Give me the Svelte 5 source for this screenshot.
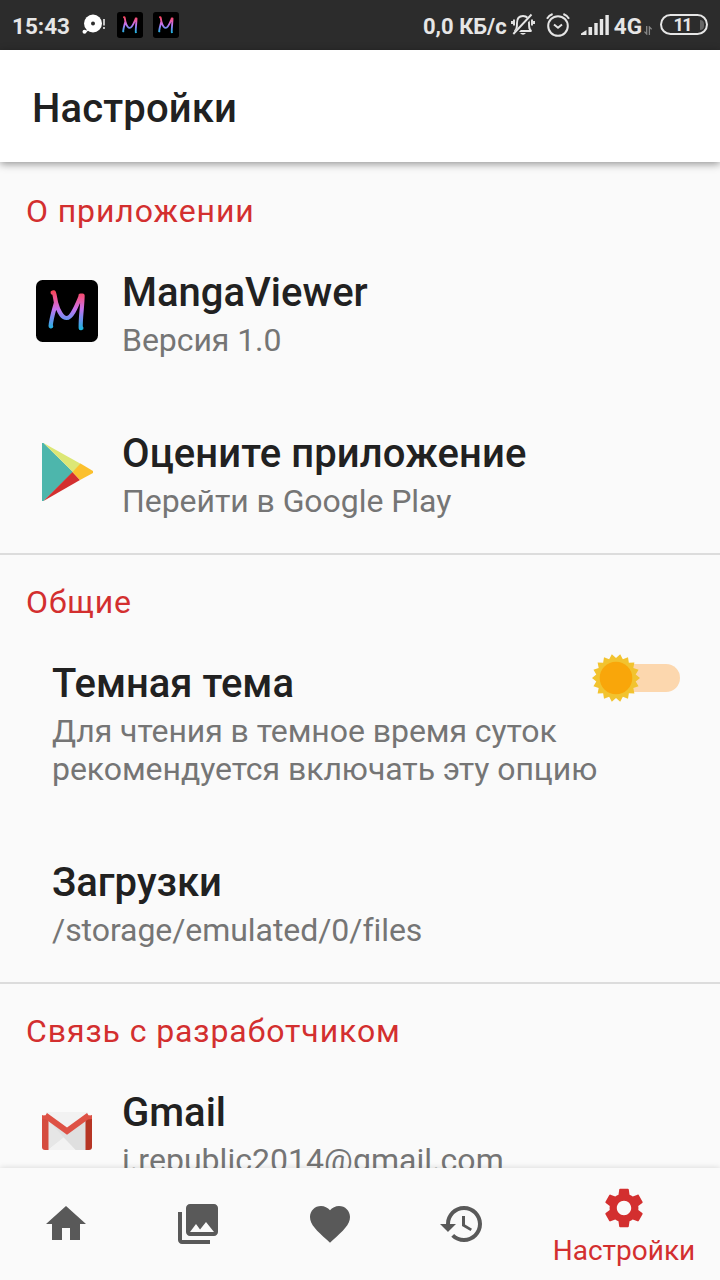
<script>
  let darkTheme = $state(false);
  let active = $state('settings');

  const tabs = [
    { id: 'home', label: 'Главная', path: 'M10 20v-6h4v6h5v-8h3L12 3 2 12h3v8z' },
    {
      id: 'library',
      label: 'Каталог',
      path: 'M22 16V4c0-1.1-.9-2-2-2H8c-1.1 0-2 .9-2 2v12c0 1.1.9 2 2 2h12c1.1 0 2-.9 2-2zm-11-4l2.03 2.71L16 11l4 5H8l3-4zM2 6v14c0 1.1.9 2 2 2h14v-2H4V6H2z'
    },
    {
      id: 'favorites',
      label: 'Избранное',
      path: 'M12 21.35l-1.45-1.32C5.4 15.36 2 12.28 2 8.5 2 5.42 4.42 3 7.5 3c1.74 0 3.41.81 4.5 2.09C13.09 3.81 14.76 3 16.5 3 19.58 3 22 5.42 22 8.5c0 3.78-3.4 6.86-8.55 11.54L12 21.35z'
    },
    {
      id: 'history',
      label: 'История',
      path: 'M13 3c-4.97 0-9 4.03-9 9H1l3.89 3.89.07.14L9 12H6c0-3.87 3.13-7 7-7s7 3.13 7 7-3.13 7-7 7c-1.93 0-3.68-.79-4.94-2.06l-1.42 1.42C8.27 19.99 10.51 21 13 21c4.97 0 9-4.03 9-9s-4.03-9-9-9zm-1 5v5l4.28 2.54.72-1.21-3.5-2.08V8H12z'
    },
    {
      id: 'settings',
      label: 'Настройки',
      path: 'M19.14 12.94c.04-.3.06-.61.06-.94 0-.32-.02-.64-.07-.94l2.03-1.58c.18-.14.23-.41.12-.61l-1.92-3.32c-.12-.22-.37-.29-.59-.22l-2.39.96c-.5-.38-1.03-.7-1.62-.94l-.36-2.54c-.04-.24-.24-.41-.48-.41h-3.84c-.24 0-.43.17-.47.41l-.36 2.54c-.59.24-1.13.57-1.62.94l-2.39-.96c-.22-.08-.47 0-.59.22L2.74 8.87c-.12.21-.08.47.12.61l2.03 1.58c-.05.3-.09.63-.09.94s.02.64.07.94l-2.03 1.58c-.18.14-.23.41-.12.61l1.92 3.32c.12.22.37.29.59.22l2.39-.96c.5.38 1.03.7 1.62.94l.36 2.54c.05.24.24.41.48.41h3.84c.24 0 .44-.17.47-.41l.36-2.54c.59-.24 1.13-.56 1.62-.94l2.39.96c.22.08.47 0 .59-.22l1.92-3.32c.12-.22.07-.47-.12-.61l-2.01-1.58zM12 15.6c-1.98 0-3.6-1.62-3.6-3.6s1.62-3.6 3.6-3.6 3.6 1.62 3.6 3.6-1.62 3.6-3.6 3.6z'
    }
  ];

  // 18 rays, every second point is pulled in
  const sunPoints = Array.from({ length: 36 }, (_, i) => {
    const r = i % 2 ? 20 : 24;
    const a = (i * Math.PI) / 18;
    return `${(24 + r * Math.cos(a)).toFixed(2)},${(24 + r * Math.sin(a)).toFixed(2)}`;
  }).join(' ');
</script>

{#snippet mangaLogo(cls, id)}
  <svg class={cls} viewBox="0 0 62 62">
    <defs>
      <linearGradient id={id} gradientUnits="userSpaceOnUse" x1="0" y1="10" x2="0" y2="50">
        <stop offset="0" stop-color="#f8434f" />
        <stop offset="0.22" stop-color="#ee5796" />
        <stop offset="0.48" stop-color="#c673ee" />
        <stop offset="0.7" stop-color="#768cf0" />
        <stop offset="1" stop-color="#16b9dc" />
      </linearGradient>
    </defs>
    <rect width="62" height="62" rx="6.5" />
    <path
      d="M16.6 12.6L17.8 12.4C19 15 19.2 19 20 22.5C17.8 31 15.3 38 14.6 46.3H15.2M20 22.5C22 30 26 38 30.6 38C36 38 40.5 26 44.5 16.5M44.5 15.6L46.6 15.5C46.4 27 44.4 37 44.7 48.2L45.4 48"
      fill="none"
      stroke="url(#{id})"
      stroke-width={cls === 'app-icon' ? 4.2 : 4.4}
      stroke-linecap="round"
      stroke-linejoin="round"
    />
  </svg>
{/snippet}

<div class="screen">
  <div class="status">
    <span class="time">15:43</span>
    <svg class="notice" viewBox="0 0 24 22">
      <circle cx="11" cy="9.5" r="9" fill="#fff" />
      <circle cx="2.5" cy="17.8" r="2" fill="#fff" />
      <path d="M3 18.5L7 15" stroke="#fff" stroke-width="1.2" />
      <circle cx="11" cy="9.5" r="2" fill="#2c2c2c" />
      <path d="M22 5v6.5M22 13v2" stroke="#ddd" stroke-width="1.7" />
    </svg>
    {@render mangaLogo('tiny first', 'grad-a')}
    {@render mangaLogo('tiny', 'grad-b')}

    <span class="speed">0,0 КБ/с</span>
    <svg class="bell" viewBox="0 0 24 24" fill="none" stroke="#e6e6e6" stroke-width="1.9">
      <path d="M3.5 18C6 17 6 14.5 6 10C6 5.5 8.5 3 12 3S18 5.5 18 10C18 14.5 18 17 20.5 18Z" />
      <path d="M3 6.5v6M1 8v3M21 6.5v6M23 8v3" stroke-width="1.9" />
      <path d="M9 20h6q-3 3.6-6 0z" fill="#e6e6e6" stroke="none" />
      <path d="M4.3 20.2L20.8 2.6" stroke="#2c2c2c" stroke-width="3.6" />
      <path d="M2.3 21L20.5 1.5" />
    </svg>
    <svg class="alarm" viewBox="0 0 24 24" fill="none" stroke="#e6e6e6" stroke-width="2">
      <circle cx="12" cy="13" r="9.8" />
      <path d="M8 11.5l4 3.2 4-3.2" stroke-width="2" />
      <path d="M1 5.7Q2.6 2.6 6.6 1M23 5.7Q21.4 2.6 17.4 1" stroke-width="2" />
    </svg>
    <svg class="signal" viewBox="0 0 28 20" fill="#e6e6e6">
      <path d="M0 20v-1.5L5.5 15v5zM7.5 12h3.6v8H7.5zM13.3 8h3.4v12h-3.4zM18.8 4h3.4v16h-3.4zM24.4 0h3.4v20h-3.4z" />
    </svg>
    <span class="net">4G</span>
    <svg class="arrows" viewBox="0 0 8 9" fill="none" stroke="#888" stroke-width="1.3">
      <path d="M2.7 0v8L.4 5.6M5.4 9V1l2.3 2.4" />
    </svg>
    <span class="battery">11<i></i></span>
  </div>

  <header>Настройки</header>

  <main>
    <section class="about">
      <h2>О приложении</h2>
      <div class="row">
        <div class="icon">{@render mangaLogo('app-icon', 'grad-c')}</div>
        <div class="text">
          <h3>MangaViewer</h3>
          <p>Версия 1.0</p>
        </div>
      </div>
      <div class="row">
        <div class="icon">
          <svg class="play" viewBox="0 0 51 58">
            <path d="M0 0h1.5L31 29 1.5 58H0z" fill="#4db6ac" />
            <path d="M1.5 0L39 21l-8 8z" fill="#dce775" />
            <path d="M1.5 58L38 37l-7.5-8z" fill="#d32f2f" />
            <path d="M38.5 20.5L51 28v2L38 37l-7.5-8z" fill="#fbc02d" />
          </svg>
        </div>
        <div class="text">
          <h3 class="rate">Оцените приложение</h3>
          <p>Перейти в Google Play</p>
        </div>
      </div>
    </section>

    <section>
      <h2>Общие</h2>
      <div class="row plain">
        <div class="text">
          <h3>Темная тема</h3>
          <p>Для чтения в темное время суток<br />рекомендуется включать эту опцию</p>
        </div>
        <button
          class="switch"
          class:on={darkTheme}
          aria-label="Темная тема"
          onclick={() => (darkTheme = !darkTheme)}
        >
          <svg viewBox="0 0 48 48">
            <polygon points={sunPoints} fill="#f2c32f" />
            <circle cx="24" cy="24" r="16.3" fill="#f9a60a" />
          </svg>
        </button>
      </div>
      <div class="row plain">
        <div class="text">
          <h3>Загрузки</h3>
          <p>/storage/emulated/0/files</p>
        </div>
      </div>
    </section>

    <section>
      <h2>Связь с разработчиком</h2>
      <div class="row">
        <div class="icon">
          <svg class="gmail" viewBox="0 0 50 38">
            <path d="M4 0h42v38H4z" fill="#f2f2f2" />
            <path d="M6 8l19 14L44 8v30H33.5L21.5 25.5 6 37z" fill="#dfdfdf" />
            <path d="M6 8l16 17.5L6 38z" fill="#e6e6e6" />
            <path d="M6 38l15.5-12.5L33.5 38z" fill="#f2f2f2" />
            <path d="M0 3l6.5 5v30H3q-3 0-3-3z" fill="#d54c3f" />
            <path d="M50 3l-6.5 5v30H47q3 0 3-3z" fill="#b63524" />
            <path d="M0 3.5L3.5 3.3 5 1 25 15.5 45 1 46.5 3.3 50 3.5V7L46 7.5 25 22.8 4 7.5 0 7z" fill="#de5145" />
          </svg>
        </div>
        <div class="text">
          <h3>Gmail</h3>
          <p class="mail">i.republic2014@gmail.com</p>
        </div>
      </div>
    </section>
  </main>

  <nav>
    {#each tabs as tab}
      <button class="tab" class:active={tab.id === active} aria-label={tab.label} onclick={() => (active = tab.id)}>
        <svg viewBox="0 0 24 24"><path d={tab.path} /></svg>
        {#if tab.id === active}<span>{tab.label}</span>{/if}
      </button>
    {/each}
  </nav>
</div>

<style>
  :global(body) {
    background: #fafafa;
  }

  .screen {
    display: flex;
    flex-direction: column;
    width: 720px;
    height: 1280px;
    overflow: hidden;
    background: #fafafa;
    color: #212121;
    font-family: Roboto, sans-serif;
  }

  .status {
    display: flex;
    align-items: center;
    flex: none;
    height: 50px;
    box-sizing: border-box;
    padding: 0 12px 0 12px;
    background: #2c2c2c;
    color: #e6e6e6;
    font-size: 22.5px;
    font-weight: 700;
    white-space: nowrap;
  }

  .time {
    width: 70px;
    padding-top: 2px;
  }

  .notice {
    width: 24px;
    height: 22px;
  }

  .status :global(.tiny) {
    width: 26px;
    height: 26px;
    margin-left: 10px;
  }

  .status :global(.first) {
    margin-left: 11px;
  }

  .speed {
    margin-left: auto;
    padding-top: 2px;
    font-size: 22px;
  }

  .bell {
    width: 24px;
    height: 24px;
    margin-left: 4px;
  }

  .alarm {
    width: 24px;
    height: 24px;
    margin-left: 11px;
  }

  .signal {
    width: 28px;
    height: 20px;
    margin-left: 11px;
  }

  .net {
    margin-left: 5px;
    padding-top: 2px;
  }

  .arrows {
    width: 8px;
    height: 9px;
    margin: 10px 8px 0 2px;
  }

  .battery {
    display: flex;
    align-items: center;
    justify-content: flex-end;
    box-sizing: border-box;
    width: 48px;
    height: 21px;
    margin-bottom: 1px;
    padding-right: 2px;
    border: 2px solid #e6e6e6;
    border-radius: 11px;
    font-size: 18px;
    line-height: 17px;
    letter-spacing: -1.6px;
  }

  .battery i {
    width: 4px;
    height: 10px;
    margin-left: 9px;
    border-radius: 0 4px 4px 0;
    background: #666;
  }

  header {
    position: relative;
    flex: none;
    height: 112px;
    padding-left: 32px;
    background: #fff;
    box-shadow: 0 2px 8px rgba(0, 0, 0, 0.42);
    font-size: 40px;
    font-weight: 500;
    line-height: 117px;
    letter-spacing: 0.15px;
  }

  main {
    flex: 1;
    min-height: 0;
    overflow: hidden;
  }

  section {
    padding: 28px 0 33px;
    border-bottom: 2px solid #dcdcdc;
  }

  .about {
    padding-top: 30px;
  }

  h2 {
    margin: 0 0 39px 26px;
    color: #d32f2f;
    font-size: 32px;
    font-weight: 400;
    line-height: 38px;
    letter-spacing: 0.9px;
  }

  .row {
    display: flex;
    align-items: flex-start;
    padding: 0 32px;
  }

  .row + .row {
    margin-top: 71px;
  }

  .plain {
    padding: 0 40px 0 52px;
  }

  .icon {
    display: flex;
    align-items: center;
    justify-content: center;
    width: 70px;
    height: 84px;
    margin-right: 20px;
  }

  .icon :global(.app-icon) {
    width: 62px;
    height: 62px;
  }

  .play {
    width: 51px;
    height: 58px;
  }

  .gmail {
    width: 50px;
    height: 38px;
  }

  .text {
    flex: 1;
  }

  h3 {
    margin: 0 0 5px;
    font-size: 40px;
    font-weight: 500;
    line-height: 47px;
  }

  .rate {
    letter-spacing: 0.1px;
  }

  p {
    margin: 0;
    color: #757575;
    font-size: 32px;
    line-height: 38px;
    letter-spacing: -0.06px;
    white-space: nowrap;
  }

  .mail {
    letter-spacing: 0.04px;
  }

  button {
    padding: 0;
    border: 0;
    background: none;
    font-family: inherit;
  }

  .switch {
    display: flex;
    align-items: center;
    width: 68px;
    height: 28px;
    margin-top: 4px;
    border-radius: 14px;
    background: #fcd7ae;
  }

  .switch svg {
    flex: none;
    width: 48px;
    height: 48px;
    margin-left: -20px;
  }

  .switch.on svg {
    margin-left: 40px;
  }

  nav {
    position: relative;
    display: flex;
    flex: none;
    height: 112px;
    background: #fafafa;
    box-shadow: 0 0 6px rgba(0, 0, 0, 0.15);
  }

  .tab {
    display: flex;
    flex-direction: column;
    align-items: center;
    justify-content: center;
    width: 132px;
    color: #595959;
  }

  .tab svg {
    width: 48px;
    height: 48px;
    fill: currentColor;
  }

  .tab.active {
    justify-content: flex-start;
    width: 192px;
    padding-top: 16px;
    color: #d32f2f;
  }

  .tab span {
    margin-top: 2px;
    font-size: 28px;
    line-height: 34px;
  }
</style>
